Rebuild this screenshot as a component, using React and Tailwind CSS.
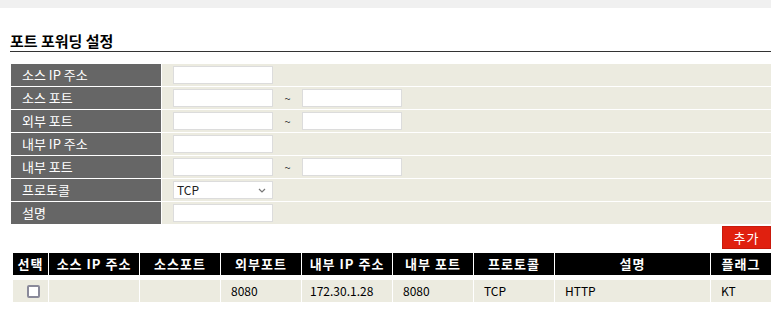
import { useState } from "react";

const fields = [
    { label: "소스 IP 주소", type: "single" },
    { label: "소스 포트", type: "range" },
    { label: "외부 포트", type: "range" },
    { label: "내부 IP 주소", type: "single" },
    { label: "내부 포트", type: "range" },
    { label: "프로토콜", type: "select" },
    { label: "설명", type: "single" },
];

const columns = ["선택", "소스 IP 주소", "소스포트", "외부포트", "내부 IP 주소", "내부 포트", "프로토콜", "설명", "플래그"];

const rows = [
    { srcIp: "", srcPort: "", extPort: "8080", inIp: "172.30.1.28", inPort: "8080", proto: "TCP", desc: "HTTP", flag: "KT" },
];

const inputCls = "w-[100px] h-[18px] bg-white border border-[#dcdcdc] outline-none px-1 text-[12px]";

const App = () => {
    const [protocol, setProtocol] = useState("TCP");

    return (
        <div className="w-[771px] h-[316px] bg-white overflow-hidden text-[12px] text-black" style={{ fontFamily: '"Noto Sans CJK KR", "Noto Sans", sans-serif' }}>
            <div className="h-2 bg-[#f0f0f0]"></div>

            <div className="pl-[10px] pt-[23px]">
                <h2 className="text-[15px] font-bold leading-[20px] pb-0 border-b border-[#333] text-black">포트 포워딩 설정</h2>
            </div>

            {/* form */}
            <div className="ml-[11px] mt-[12px] flex flex-col gap-px bg-white">
                {fields.map((f) => (
                    <div key={f.label} className="flex gap-px h-[22px]">
                        <div className="w-[150px] bg-[#666666] text-white flex items-center pl-[11px] text-[13px]">{f.label}</div>
                        <div className="flex-1 bg-[#ecebe0] flex items-center pl-[11px]">
                            {f.type === "select" ? (
                                <div className="relative w-[100px] h-[18px] bg-white border border-[#dcdcdc] flex items-center pl-[3px] text-[12px] text-[#222]">
                                    <span className="leading-none">{protocol}</span>
                                    <svg className="absolute right-[6px] top-[6px]" width="8" height="5" viewBox="0 0 8 5">
                                        <path d="M1 1 L4 4 L7 1" fill="none" stroke="#777" strokeWidth="1.2" />
                                    </svg>
                                </div>
                            ) : (
                                <input type="text" className={inputCls} />
                            )}
                            {f.type === "range" && (
                                <>
                                    <span className="w-[29px] text-center text-[11px] text-[#333]">~</span>
                                    <input type="text" className={inputCls} />
                                </>
                            )}
                        </div>
                    </div>
                ))}
            </div>

            <div className="flex justify-end mt-[2px]">
                <button className="w-[49px] h-[23px] bg-[#e0200f] text-white text-[13px] tracking-[1px] border border-[#c81a0c]" onClick={() => setProtocol("TCP")}>추가</button>
            </div>

            {/* list */}
            <div className="ml-[13px] mt-[4px] grid grid-cols-[35px_90px_80px_80px_90px_80px_80px_155px_1fr] gap-x-px gap-y-[5px] bg-white">
                {columns.map((c) => (
                    <div key={c} className="h-[22px] bg-black text-white font-bold flex items-center justify-center text-[13px] tracking-[1px]">{c}</div>
                ))}
                {rows.map((r, i) => (
                    <div key={i} className="contents">
                        <div className="h-[22px] bg-[#ecebe0] flex items-center justify-center pl-[6px]">
                            <span className="w-[13px] h-[13px] border-2 border-[#8a8a9a] rounded-[2px] bg-white"></span>
                        </div>
                        <div className="bg-[#ecebe0] flex items-center pl-[10px]">{r.srcIp}</div>
                        <div className="bg-[#ecebe0] flex items-center pl-[10px]">{r.srcPort}</div>
                        <div className="bg-[#ecebe0] flex items-center pl-[10px]">{r.extPort}</div>
                        <div className="bg-[#ecebe0] flex items-center pl-[8px]">{r.inIp}</div>
                        <div className="bg-[#ecebe0] flex items-center pl-[10px]">{r.inPort}</div>
                        <div className="bg-[#ecebe0] flex items-center pl-[10px]">{r.proto}</div>
                        <div className="bg-[#ecebe0] flex items-center pl-[10px]">{r.desc}</div>
                        <div className="bg-[#ecebe0] flex items-center pl-[10px]">{r.flag}</div>
                    </div>
                ))}
            </div>
        </div>
    );
};

export default App;
